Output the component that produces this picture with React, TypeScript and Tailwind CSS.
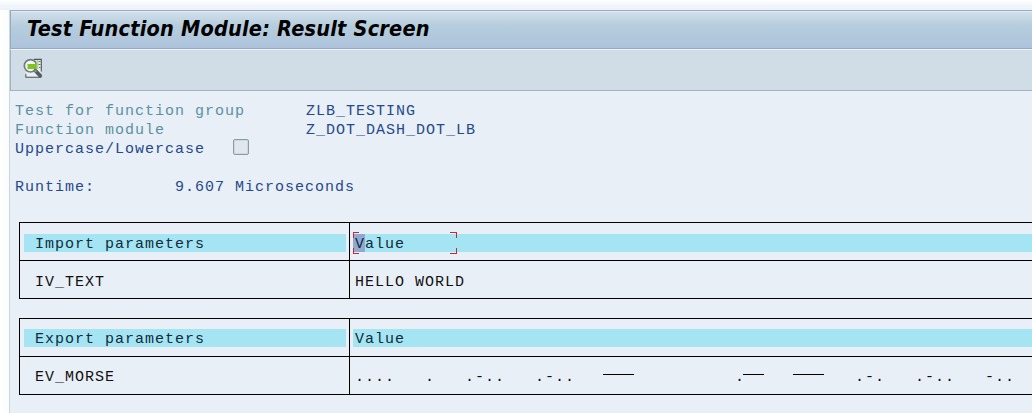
import type { ReactNode } from 'react';

const morse: { text: string; gap: string; line?: string }[] = [
  { text: '....', gap: 'w-[70px]' },
  { text: '.', gap: 'w-[40px]' },
  { text: '.-..', gap: 'w-[70px]' },
  { text: '.-..', gap: 'w-[68px]' },
  { text: '', gap: 'w-[132px]', line: 'w-[31px]' },
  { text: '.', gap: 'w-[58px]', line: 'w-[21px]' },
  { text: '', gap: 'w-[62px]', line: 'w-[31px]' },
  { text: '.-.', gap: 'w-[60px]' },
  { text: '.-..', gap: 'w-[70px]' },
  { text: '-..', gap: 'w-[48px]' },
];

interface ResultTableProps {
  title: string;
  name: string;
  headPad: string;
  bodyPad: string;
  heading: ReactNode;
  children: ReactNode;
}

function ResultTable({ title, name, headPad, bodyPad, heading, children }: ResultTableProps) {
  return (
    <section className="grid h-[77px] grid-cols-[330px_1fr] grid-rows-[38px_38px] border-l border-t border-black text-[#101010]">
      <div className={`border-b border-r border-black pl-1 pr-[3px] ${headPad}`}>
        <div className="h-[18px] bg-[#a5e5f3] pl-[11px] leading-[21px] text-[#102c3a]">{title}</div>
      </div>
      <div className={`border-b border-black pl-[3px] ${headPad}`}>{heading}</div>
      <div className={`border-b border-r border-black pl-[15px] leading-[19px] ${bodyPad}`}>{name}</div>
      <div className={`border-b border-black pl-[5px] leading-[19px] ${bodyPad}`}>{children}</div>
    </section>
  );
}

function FindIcon() {
  return (
    <svg width="20" height="21" viewBox="0 0 20 21" fill="none">
      <path d="M11 1.5H18.2V13.5M3 16V19.2H18" stroke="#50545c" strokeWidth="1.3" />
      <path d="M11 2H17.5V18.5H3.5V14H11Z" fill="#e9f0ef" />
      <path d="M15.5 3.5H17.5M15 6.5H17.5M16 9.5H17.5" stroke="#687077" />
      <circle cx="7.5" cy="7.8" r="6.2" fill="#f0f7f4" stroke="#747b80" strokeWidth="1.7" />
      <path d="M4.5 6H13.5V11H4.5Z" fill="#7fc222" />
      <path d="M13.5 2V11H15.5V2Z" fill="#b5d98a" />
      <path d="M12.5 12.7L17.2 17.8" stroke="#555b62" strokeWidth="3.8" strokeLinecap="round" />
      <path d="M11.7 12L13.2 13.8" stroke="#8b9298" strokeWidth="2" />
    </svg>
  );
}

export default function App() {
  return (
    <main className="flex h-[413px] w-[1032px] flex-col overflow-hidden bg-[#fafcff] font-['Liberation_Mono',monospace] text-[15px] tracking-[0.998px]">
      <div className="h-[10px] shrink-0 bg-linear-to-b from-[#ffffff] via-[#f2f6fc] to-[#edf1f9]" />
      <div className="flex min-h-0 flex-1 bg-linear-to-b from-[#eef3f9] to-white">
        <div className="w-[9px] shrink-0 bg-linear-to-r from-white to-[#fbfcfd]" />
        <div className="min-w-0 flex-1 border-l border-[#cdd7df] bg-[#e8eff6]">
          <header className="flex h-[39px] border-b border-l border-t border-[#98abbc] bg-linear-to-b from-[#d2e1ec] from-0% via-[#b6cddd] via-40% to-[#adc3dc] pl-[16px] shadow-[inset_0_1px_0_#e1ebf3]">
            <h1 className="whitespace-nowrap font-['DejaVu_Sans',sans-serif] text-[21.5px] font-bold italic leading-[35px] tracking-[0.22px] text-black [font-stretch:75%]">Test Function Module: Result Screen</h1>
          </header>
          <div className="h-[42px] border-b border-l border-t border-b-[#9fb2bf] border-l-[#9fb2bf] border-t-[#e9f2f8] bg-[#d0dde7] pl-3 pt-[8px]">
            <FindIcon />
          </div>
          <div className="whitespace-pre pl-[5px] pt-[11px] leading-[19px] text-[#26498b]">
            <div className="flex h-[19px]"><span className="w-[291px] text-[#5b91a2]">Test for function group</span><span>ZLB_TESTING</span></div>
            <div className="flex h-[19px]"><span className="w-[291px] text-[#5b91a2]">Function module</span><span>Z_DOT_DASH_DOT_LB</span></div>
            <div className="flex h-[19px]"><span className="w-[218px]">Uppercase/Lowercase</span><span className="-mt-px h-4 w-4 rounded-[2px] border border-[#8e9aa6] bg-[#dfe8ef] shadow-[inset_0_0_0_1px_#cdd8e1]" /></div>
            <div className="mt-[19px] flex h-[19px]"><span className="w-[160px]">Runtime:</span><span>9.607 Microseconds</span></div>
          </div>
          <div className="flex flex-col gap-[19px] pl-[9px] pt-[25px]">
            <ResultTable title="Import parameters" name="IV_TEXT" headPad="pt-[11px]" bodyPad="pt-[12px]" heading={
              <div className="relative h-[18px] bg-[#a5e5f3] pl-[2px] leading-[21px] text-[#102c3a]">
                <span className="absolute left-0 top-0 h-[18px] w-3 bg-[#91a9d0]" />
                <span className="relative">Value</span>
                <i className="absolute -top-[2px] left-0 h-[6px] w-[6px] border-l border-t border-[#c3263f]" />
                <i className="absolute -bottom-[2px] left-0 h-[6px] w-[6px] border-b border-l border-[#c3263f]" />
                <i className="absolute -top-[2px] left-[97px] h-[6px] w-[7px] border-r border-t border-[#c3263f]" />
                <i className="absolute -bottom-[2px] left-[97px] h-[6px] w-[7px] border-b border-r border-[#c3263f]" />
              </div>
            }>HELLO WORLD</ResultTable>
            <ResultTable title="Export parameters" name="EV_MORSE" headPad="pt-[10px]" bodyPad="pt-[11px]" heading={<div className="h-[18px] bg-[#a5e5f3] pl-[2px] leading-[21px] text-[#102c3a]">Value</div>}>
              <div className="flex h-[19px]">
                {morse.map((letter, index) => (
                  <span key={index} className={`flex shrink-0 whitespace-nowrap ${letter.gap}`}>
                    {letter.text && <span className={letter.line ? 'w-2' : undefined}>{letter.text}</span>}
                    {letter.line && <span className={`mt-[6px] h-px bg-black ${letter.line}`} />}
                  </span>
                ))}
              </div>
            </ResultTable>
          </div>
        </div>
      </div>
    </main>
  );
}
